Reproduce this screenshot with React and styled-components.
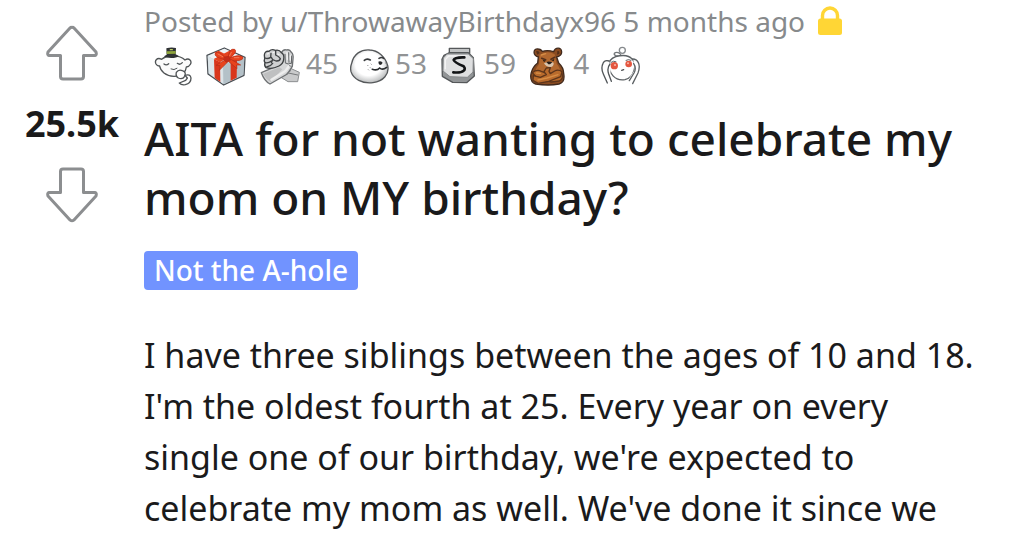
import React from 'react'
import styled, { createGlobalStyle } from 'styled-components'

const GlobalStyle = createGlobalStyle`
  body {
    margin: 0;
    background-color: #ffffff;
    color: #1a1a1b;
    font-family: 'Noto Sans', 'Open Sans', sans-serif;
  }
`
const Post = styled.article`
  display: flex;
  align-items: flex-start;
  height: 100vh;
  overflow: hidden;
`
const Votes = styled.div`
  flex: none;
  width: 144px;
  padding-top: 24px;
  display: flex;
  flex-direction: column;
  align-items: center;
`
const VoteButton = styled.button`
  display: flex;
  padding: 0;
  border: none;
  background: none;
  cursor: pointer;

  svg {
    transform: ${props => (props.$down ? 'rotate(180deg)' : 'none')};
  }
`
const Score = styled.span`
  font-size: 36px;
  font-weight: 700;
  line-height: 84px;
`
const Content = styled.div`
  flex: 1;
  min-width: 0;
  padding: 3px 44px 0 0;
`
const Meta = styled.div`
  display: flex;
  align-items: center;
  gap: 12px;
  font-size: 28px;
  line-height: 36px;
  color: #878a8c;
  white-space: nowrap;
`
const Author = styled.a`
  color: inherit;
  text-decoration: none;
`
const Awards = styled.ul`
  display: flex;
  gap: 11px;
  margin: 0;
  padding: 7px 0 0 8px;
  list-style: none;
`
const Award = styled.li`
  display: flex;
  align-items: center;
  gap: 6px;
  height: 40px;
  padding-right: ${props => (props.$single ? '3px' : '0')};
  font-size: 28px;
  line-height: 36px;
  color: #919395;

  svg {
    flex: none;
  }
  span {
    margin-bottom: 6px;
  }
`
const Title = styled.h1`
  margin: 23px 0 0;
  font-size: 46px;
  font-weight: 500;
  line-height: 59px;
`
const Flair = styled.a`
  display: inline-block;
  margin-top: 24px;
  padding: 0 10px;
  border-radius: 4px;
  background-color: #7193ff;
  color: #ffffff;
  font-size: 28px;
  font-weight: 500;
  line-height: 39px;
  text-decoration: none;
`
const Body = styled.p`
  margin: 40px 0 0;
  font-size: 34px;
  line-height: 51px;
`

function Arrow() {
  return (
    <svg width="54" height="58" viewBox="0 0 54 58" fill="none" stroke="#8c8e90" strokeWidth="3" strokeLinejoin="round">
      <path d="M27 3.500Q28 3 29 4L51 28Q52 31 50 31.500H38.500V52.500Q38.500 55 36 55H18Q15.500 55 15.500 52.500V31.500H4Q2 31 3 28L25 4Q26 3 27 3.500Z" />
    </svg>
  )
}

function Lock() {
  return (
    <svg width="26" height="30" viewBox="0 0 26 30">
      <path d="M5.500 14V9.500a7.500 7.500 0 0 1 15 0V14" fill="none" stroke="#ffd635" strokeWidth="3.400" />
      <rect x="1" y="12.500" width="24" height="16.500" rx="2.500" fill="#ffd635" />
    </svg>
  )
}

function Icon({ label, children }) {
  return (
    <svg width="40" height="40" viewBox="0 0 120 120" role="img" aria-label={label} fill="none" strokeLinecap="round" strokeLinejoin="round">
      {children}
    </svg>
  )
}

function Wholesome() {
  return (
    <Icon label="Tip of the hat">
      <g stroke="#505456" strokeWidth="4">
        <path fill="#fbfbfb" d="M29 40C15 33 7 44 12 54Q16 61 23 60C25 75 41 90 66 91C92 91 102 76 103 63C114 62 121 49 114 42Q108 36 99 42C83 26 47 25 29 40Z" />
        <path d="M36 54Q43 60 50 53M76 52Q84 58 91 50" />
        <path d="M57 69Q66 74 75 67" strokeWidth="3" />
        <path fill="#fff" d="M73 79Q80 69 91 74Q104 78 98 91Q92 101 79 96Q70 90 73 79Z" />
        <path fill="#fff" d="M99 88Q115 83 117 96Q117 112 100 116Q88 118 82 111L101 103L106 96Z" />
      </g>
      <path fill="#2f3234" d="M43 7Q57 3 72 6L71 25L80 30Q74 36 58 36Q41 36 36 31L44 26Z" />
      <path stroke="#8fa53c" strokeWidth="8" strokeLinecap="butt" d="M44 20L71 19" />
      <path stroke="#bdce6a" strokeWidth="4" d="M55 11L61 11" />
    </Icon>
  )
}

function Gift() {
  return (
    <Icon label="Gift">
      <path fill="#c8d3d9" stroke="#4a4f54" strokeWidth="4" d="M3 28L55 6L117 34L114 88L53 117L6 84Z" />
      <path fill="#eef2f4" d="M5 30L55 8L114 35L51 54Z" />
      <path fill="#b4c1c8" d="M51 54L115 36L112 86L53 114Z" />
      <path fill="#dce5e9" d="M5 31L50 53L51 113L8 82Z" />
      <path fill="#d9361c" d="M24 40L42 48L43 108L26 96ZM74 48L93 43L92 95L74 104Z" />
      <path fill="#e6431f" d="M23 39L73 13L89 21L42 49ZM24 20L38 14L93 43L74 48Z" />
      <g fill="#e8431d" stroke="#b52c17" strokeWidth="2">
        <path d="M61 39Q36 7 27 24Q26 35 60 41ZM66 38Q69 5 86 10Q97 18 67 40Z" />
        <path d="M66 38Q101 22 111 34Q113 48 67 43Z" />
        <path d="M58 41L30 58L43 59L40 73L67 46L93 68L92 57L104 57L73 39Z" />
        <path fill="#c52d19" d="M56 33L68 31L73 43L61 49L54 42Z" />
      </g>
      <path stroke="#f17d58" strokeWidth="3" d="M36 24L50 32M76 19L71 29M85 35L99 35" />
    </Icon>
  )
}

function Fists() {
  return (
    <Icon label="Brothers in arms">
      <path fill="#c9cacb" stroke="#8b8e90" strokeWidth="3" d="M52 70L83 61L96 69L118 79L113 107L84 107L58 91Z" />
      <path fill="#d6d7d8" stroke="#6e7173" strokeWidth="4" d="M63 22Q70 8 80 12Q89 9 94 19Q101 25 99 39L97 61L82 84L30 114Q13 105 4 80L48 61L66 51Z" />
      <path fill="#bfc0c1" d="M9 84L57 64L67 70L32 108Q18 100 9 84Z" />
      <path stroke="#ededed" strokeWidth="7" d="M34 101L76 75L89 57" />
      <path stroke="#77797b" strokeWidth="3" d="M80 83L92 74M88 59L94 61M85 81L113 87" />
      <path fill="#cfd0d1" stroke="#3d4042" strokeWidth="4" d="M13 27Q14 14 27 16Q35 8 46 13Q58 10 64 20Q74 25 71 41Q69 54 57 60Q35 71 18 65Q12 60 15 50Q11 44 14 38Z" />
      <path stroke="#414446" strokeWidth="4" d="M15 36Q23 40 32 34L33 22M16 50Q25 52 34 45M20 63Q32 61 38 52M34 34L38 41L34 50M47 14L47 27Q57 31 61 38Q60 46 48 45L38 41" />
      <path stroke="#5f6264" strokeWidth="3" d="M75 25L76 49M86 20L87 49M95 30L94 51M76 51Q84 57 94 52" />
      <path stroke="#f2f2f2" strokeWidth="4" d="M22 24L26 22M39 20L42 19M53 24L57 26M81 20L82 40M91 29L91 42" />
    </Icon>
  )
}

function Seal() {
  return (
    <Icon label="Wholesome seal">
      <defs>
        <radialGradient id="seal" cx="48%" cy="43%" r="58%">
          <stop offset="0.600" stopColor="#ffffff" />
          <stop offset="1" stopColor="#b8babb" />
        </radialGradient>
      </defs>
      <path fill="url(#seal)" stroke="#55585a" strokeWidth="4" d="M8 52C14 24 36 10 62 12C87 13 108 31 116 58C122 84 103 106 72 110C39 114 13 99 6 77Q3 65 8 52Z" />
      <path stroke="#383b3d" strokeWidth="5" d="M46 43Q53 36 64 42M90 37Q98 32 104 37" />
      <path stroke="#292c2e" strokeWidth="5" d="M70 70Q84 75 92 66Q100 74 113 64" />
      <path fill="#27292b" d="M88 47Q95 44 101 50Q98 57 93 57Q88 54 88 47Z" />
      <path stroke="#858789" strokeWidth="3" d="M56 58L57 59M66 54L67 55M64 65L65 66M58 71L59 72M109 51L110 51M112 57L113 57" />
    </Icon>
  )
}

function Silver() {
  return (
    <Icon label="Silver">
      <path fill="#c2c4c5" stroke="#55585a" strokeWidth="4" d="M34 7L95 7L95 22L34 24Z" />
      <path fill="#929597" stroke="#55585a" strokeWidth="4" d="M18 28L35 20H91L106 35L109 90L86 110L44 109L13 91L12 40Z" />
      <path fill="#dedfe0" stroke="#85888a" strokeWidth="3" d="M28 24H91L106 38L105 78L88 94L36 92L15 75L16 37Z" />
      <path stroke="#f4f4f4" strokeWidth="4" d="M22 68V41L32 30H84" />
      <path stroke="#111315" strokeWidth="8" d="M79 34Q50 33 47 42Q49 49 77 61Q84 69 76 75Q69 81 46 79" />
    </Icon>
  )
}

function Bear() {
  return (
    <Icon label="Bear hug">
      <path fill="#8b4c21" stroke="#40291c" strokeWidth="4" d="M34 33C16 28 18 6 34 9Q42 10 46 16Q62 11 80 17C85 3 103 3 104 18Q104 29 89 33L95 51Q110 65 110 82Q115 109 96 114Q65 120 26 114Q6 107 13 79Q18 62 32 51Z" />
      <path fill="#b2682f" d="M38 27Q60 12 83 25L89 53Q102 68 99 79L28 85Q20 74 36 55Z" />
      <path fill="#54301a" d="M27 16Q35 12 38 21L31 26ZM91 15Q99 13 97 23L90 26Z" />
      <path stroke="#55301b" strokeWidth="5" d="M44 37L56 41M83 34L72 40" />
      <path fill="#271b15" d="M47 41L57 44L51 48ZM73 43L82 39L80 46Z" />
      <path fill="#d9c3ab" d="M51 52Q66 43 80 50Q81 60 72 63Q57 64 51 52Z" />
      <path fill="#221b18" d="M58 48Q67 44 76 49L69 55H64Z" />
      <path fill="#b96b2c" stroke="#5d351b" strokeWidth="4" d="M16 80Q29 69 43 76L75 88L104 81Q112 96 97 105L73 108L26 91Z" />
      <path fill="#b96b2c" stroke="#5d351b" strokeWidth="4" d="M105 77Q94 69 83 75L70 83L66 76L70 65L58 66L51 77L58 86L40 94L19 89L18 103L33 112L65 106L101 92Z" />
      <path stroke="#d68d45" strokeWidth="4" d="M28 81L40 82M33 102L60 96L93 86M43 27L56 23" />
    </Icon>
  )
}

function Snoo() {
  return (
    <Icon label="Shocked">
      <path stroke="#73777a" strokeWidth="4" d="M66 34Q57 30 48 29Q38 25 46 20Q55 17 62 25" />
      <circle cx="67" cy="13" r="9" fill="#fff" stroke="#85898c" strokeWidth="4" />
      <path fill="#ffffff" stroke="#5d6265" strokeWidth="4" d="M28 50C34 27 82 21 97 40C112 54 103 94 75 101C46 106 24 83 28 50Z" />
      <path fill="#fff" d="M9 50L27 45L33 62L30 95L25 112L8 83Z" />
      <path stroke="#505558" strokeWidth="4" d="M27 45Q14 41 9 52Q2 66 10 84L22 111M30 54Q20 66 26 84L34 106" />
      <path fill="#fff" d="M100 41L115 49L116 80L95 113L88 97L104 72Z" />
      <path stroke="#5d6265" strokeWidth="4" d="M97 39Q109 38 115 50Q121 62 114 81L98 113M101 53Q110 66 102 81L88 104" />
      <ellipse cx="43" cy="59" rx="11" ry="11" fill="#e4563f" />
      <ellipse cx="86" cy="54" rx="10" ry="10" fill="#e4563f" />
      <circle cx="45" cy="57" r="3" fill="#f8b7a8" />
      <circle cx="84" cy="52" r="3" fill="#f8b7a8" />
      <path stroke="#5d6265" strokeWidth="3" d="M33 49Q40 43 48 47M78 43Q86 38 93 43" />
      <path stroke="#494c4e" strokeWidth="4" d="M65 73L71 71" />
    </Icon>
  )
}

const awards = [
  { name: 'hat', icon: <Wholesome /> },
  { name: 'gift', icon: <Gift /> },
  { name: 'fists', icon: <Fists />, count: 45 },
  { name: 'seal', icon: <Seal />, count: 53 },
  { name: 'silver', icon: <Silver />, count: 59 },
  { name: 'bear', icon: <Bear />, count: 4 },
  { name: 'snoo', icon: <Snoo /> },
]

function App() {
  return (
    <>
      <GlobalStyle />
      <Post>
        <Votes>
          <VoteButton aria-label="Upvote"><Arrow /></VoteButton>
          <Score>25.5k</Score>
          <VoteButton $down aria-label="Downvote"><Arrow /></VoteButton>
        </Votes>
        <Content>
          <Meta>
            <span>Posted by <Author href="#user">u/ThrowawayBirthdayx96</Author> 5 months ago</span>
            <Lock />
          </Meta>
          <Awards>
            {awards.map(award => (
              <Award key={award.name} $single={!award.count}>
                {award.icon}
                {award.count && <span>{award.count}</span>}
              </Award>
            ))}
          </Awards>
          <Title>AITA for not wanting to celebrate my mom on MY birthday?</Title>
          <Flair href="#flair">Not the A-hole</Flair>
          <Body>
            I have three siblings between the ages of 10 and 18. I'm the oldest fourth at 25. Every
            year on every single one of our birthday, we're expected to celebrate my mom as well.
            We've done it since we
          </Body>
        </Content>
      </Post>
    </>
  )
}

export default App
